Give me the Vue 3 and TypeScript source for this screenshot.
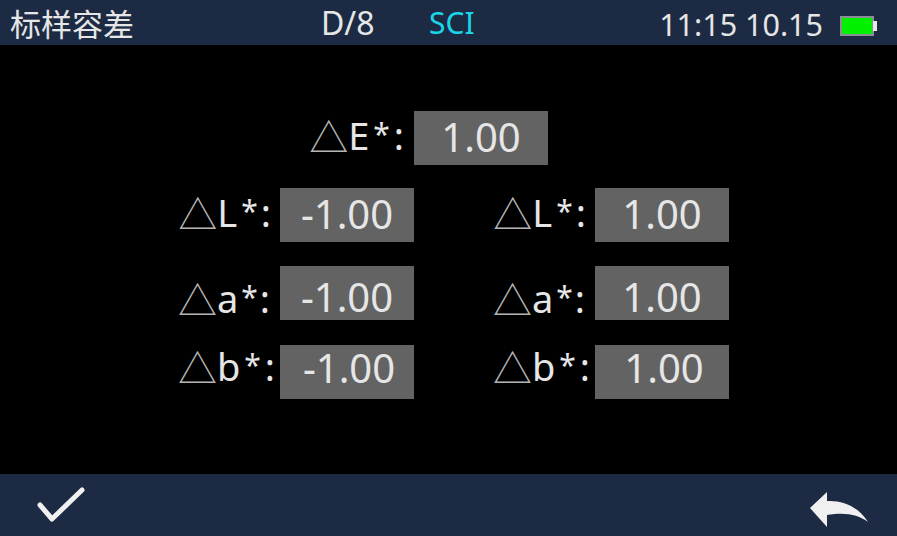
<script setup lang="ts">
const lowerRows = [
  { label: "L", min: "-1.00", max: "1.00" },
  { label: "a", min: "-1.00", max: "1.00" },
  { label: "b", min: "-1.00", max: "1.00" },
]
</script>

<template>
  <div class="screen">
    <header class="top-bar">
      <span class="title">标样容差</span>
      <span class="geometry">D/8</span>
      <span class="mode">SCI</span>
      <span class="clock">11:15 10.15</span>
      <svg class="battery" width="38" height="20" viewBox="0 0 38 20">
        <rect x="1" y="1" width="32" height="18" fill="#00f000" stroke="#8a8f96" stroke-width="2" />
        <rect x="33" y="5" width="4" height="10" fill="#e8e8e8" />
      </svg>
    </header>

    <main class="content">
      <div class="row row-single row-E">
        <div class="field">
          <span class="label"><span class="delta">△</span>E<span class="star">*</span>:</span>
          <span class="value">1.00</span>
        </div>
      </div>
      <div class="row" :class="'row-' + r.label" v-for="r in lowerRows" :key="r.label">
        <div class="field">
          <span class="label"><span class="delta">△</span>{{ r.label }}<span class="star">*</span>:</span>
          <span class="value">{{ r.min }}</span>
        </div>
        <div class="field">
          <span class="label"><span class="delta">△</span>{{ r.label }}<span class="star">*</span>:</span>
          <span class="value">{{ r.max }}</span>
        </div>
      </div>
    </main>

    <footer class="bottom-bar">
      <svg width="50" height="36" viewBox="0 0 50 36">
        <path d="M4 18 L16 32 L46 3" fill="none" stroke="#f0f0f0" stroke-width="5" stroke-linecap="round" stroke-linejoin="round" />
      </svg>
      <svg width="60" height="46" viewBox="0 0 60 46">
        <path d="M2 26 L19 10 L19 19 C34 18 50 24 60 40 C50 32 36 30 19 33 L19 45 Z" fill="#f0f0f0" />
      </svg>
    </footer>
  </div>
</template>

<style>
html,
body {
  margin: 0;
  background: #000;
}
</style>

<style scoped>
.screen {
  width: 897px;
  height: 536px;
  display: flex;
  flex-direction: column;
  background: #000;
  color: #e6e6e6;
  font-family: "Noto Sans", "Noto Sans CJK SC", sans-serif;
  overflow: hidden;
}
.top-bar {
  height: 45px;
  flex: none;
  display: flex;
  align-items: center;
  padding: 0 19px 0 10px;
  background: #1c2b43;
  font-size: 30px;
}
.title {
  font-size: 31px;
  width: 311px;
}
.geometry {
  width: 108px;
  font-size: 32px;
}
.mode {
  color: #19d5e6;
}
.clock {
  margin: 3px 17px 0 auto;
  font-size: 30.5px;
}
.battery {
  margin-top: 6px;
}
.content {
  flex: 1;
  padding: 66px 0 0 160px;
  display: flex;
  flex-direction: column;
  gap: 24px;
}
.row {
  display: flex;
  gap: 61px;
}
.row-single {
  margin-left: 134px;
  margin-bottom: -1px;
}
.row-b {
  margin-top: 1px;
}
.field {
  display: flex;
}
.label {
  width: 120px;
  height: 54px;
  line-height: 48px;
  text-align: right;
  padding-right: 10px;
  box-sizing: border-box;
  font-size: 38px;
  white-space: nowrap;
}
.delta {
  font-family: "Noto Sans CJK SC", sans-serif;
  font-size: 39px;
  line-height: 0;
  vertical-align: -2px;
  color: #b4b4b4;
}
.star {
  font-size: 30px;
  line-height: 0;
  vertical-align: 5px;
  margin: 0 4px 0 4px;
}
.value {
  width: 134px;
  height: 54px;
  display: flex;
  align-items: center;
  justify-content: center;
  box-sizing: border-box;
  padding-bottom: 3px;
  background: #636363;
  font-size: 40px;
}
.row-L .label {
  padding-right: 9px;
}
.row-L .star {
  margin-right: 3px;
}
.row-a .label {
  padding-top: 8px;
}
.row-a .star {
  margin: 0 2px 0 3px;
}
.row-a .value {
  padding: 6px 0 0;
}
.row-b .label {
  line-height: 42px;
  padding-right: 5px;
}
.row-b .value {
  padding: 0 0 9px 4px;
}
.bottom-bar {
  height: 62px;
  flex: none;
  display: flex;
  align-items: center;
  justify-content: space-between;
  padding: 0 29px 0 36px;
  background: #1c2b43;
}
</style>
